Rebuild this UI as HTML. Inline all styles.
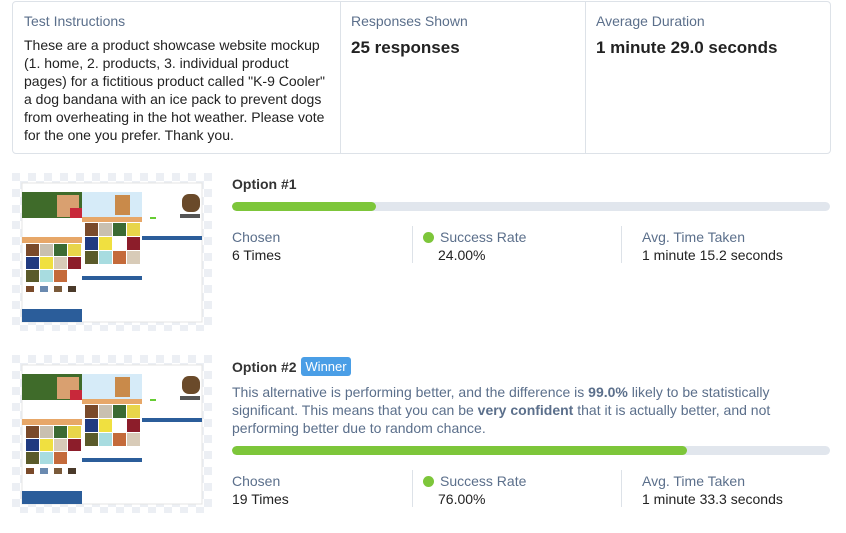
<!DOCTYPE html>
<html><head><meta charset="utf-8"><style>
body{margin:0;width:846px;height:533px;background:#fff;font-family:"Liberation Sans",Arial,sans-serif;position:relative;overflow:hidden;color:#222}
.a{position:absolute;white-space:nowrap}
.lbl{color:#5b6f8b;font-size:14px}
.val{color:#222;font-size:14px}
.box{position:absolute;left:12px;top:1px;width:817px;height:151px;border:1px solid #dde2e8;border-radius:4px}
.vd{position:absolute;width:1px;background:#dde2e8}
.bar{position:absolute;left:232px;width:598px;height:9px;border-radius:5px;background:#e1e6ed;overflow:hidden}
.bar div{height:100%;background:#7dc63a;border-radius:5px}
.dot{display:inline-block;width:11px;height:11px;border-radius:50%;background:#7dc63a;margin-right:6px;vertical-align:-1px}
b{font-weight:bold}
</style></head><body>
<div class="box"></div>
<div class="vd" style="left:340px;top:2px;height:151px"></div>
<div class="vd" style="left:585px;top:2px;height:151px"></div>
<div class="a lbl" style="left:24px;top:13px">Test Instructions</div>
<div class="a val" style="left:24px;top:36px;line-height:18px">These are a product showcase website mockup<br>(1. home, 2. products, 3. individual product<br>pages) for a fictitious product called "K-9 Cooler"<br>a dog bandana with an ice pack to prevent dogs<br>from overheating in the hot weather. Please vote<br>for the one you prefer. Thank you.</div>
<div class="a lbl" style="left:351px;top:13px">Responses Shown</div>
<div class="a" style="left:351px;top:38px;font-size:17px;font-weight:bold;color:#222">25 responses</div>
<div class="a lbl" style="left:596px;top:13px">Average Duration</div>
<div class="a" style="left:596px;top:38px;font-size:17px;font-weight:bold;color:#222">1 minute 29.0 seconds</div>

<svg width="0" height="0" style="position:absolute"><defs>
<pattern id="ck" width="16" height="16" patternUnits="userSpaceOnUse"><rect width="16" height="16" fill="#fff"/><rect width="8" height="8" fill="#eceff4"/><rect x="8" y="8" width="8" height="8" fill="#eceff4"/></pattern>
<g id="mock">
<rect width="200" height="158" fill="url(#ck)"/>
<rect x="10" y="10" width="180" height="139" fill="#fff" stroke="#e4e4e4"/>
<rect x="10" y="19" width="60" height="26" fill="#3f6b2a"/><rect x="45" y="22" width="22" height="22" fill="#d9a070"/><rect x="58" y="35" width="12" height="10" fill="#c8283a"/>
<rect x="10" y="64" width="60" height="6" fill="#e7a768"/>
<rect x="14" y="71" width="13" height="12" fill="#7a4a2a"/><rect x="28" y="71" width="13" height="12" fill="#c9c0b0"/><rect x="42" y="71" width="13" height="12" fill="#3b6a33"/><rect x="56" y="71" width="13" height="12" fill="#e8d54a"/>
<rect x="14" y="84" width="13" height="12" fill="#203a80"/><rect x="28" y="84" width="13" height="12" fill="#f0e040"/><rect x="42" y="84" width="13" height="12" fill="#d8cbb8"/><rect x="56" y="84" width="13" height="12" fill="#8c1d2a"/>
<rect x="14" y="97" width="13" height="12" fill="#5a5a2a"/><rect x="28" y="97" width="13" height="12" fill="#a8dce0"/><rect x="42" y="97" width="13" height="12" fill="#c46a3a"/>
<rect x="14" y="113" width="8" height="6" fill="#7a4a2a"/><rect x="28" y="113" width="8" height="6" fill="#6a8ab0"/><rect x="42" y="113" width="8" height="6" fill="#7a5a3a"/><rect x="56" y="113" width="8" height="6" fill="#4a3a2a"/>
<rect x="10" y="136" width="60" height="13" fill="#2b5d9a"/>
<rect x="70" y="19" width="60" height="25" fill="#d6ebf8"/><rect x="103" y="22" width="15" height="20" fill="#c98a4a"/>
<rect x="70" y="44" width="60" height="5" fill="#e7a768"/>
<rect x="73" y="50" width="13" height="13" fill="#7a4a2a"/><rect x="87" y="50" width="13" height="13" fill="#c9c0b0"/><rect x="101" y="50" width="13" height="13" fill="#3b6a33"/><rect x="115" y="50" width="13" height="13" fill="#e8d54a"/>
<rect x="73" y="64" width="13" height="13" fill="#203a80"/><rect x="87" y="64" width="13" height="13" fill="#f0e040"/><rect x="115" y="64" width="13" height="13" fill="#8c1d2a"/>
<rect x="73" y="78" width="13" height="13" fill="#5a5a2a"/><rect x="87" y="78" width="13" height="13" fill="#a8dce0"/><rect x="101" y="78" width="13" height="13" fill="#c46a3a"/><rect x="115" y="78" width="13" height="13" fill="#d8cbb8"/>
<rect x="70" y="103" width="60" height="4" fill="#2b5d9a"/>
<rect x="170" y="21" width="18" height="18" rx="7" fill="#6a4a2a"/><rect x="168" y="41" width="20" height="4" fill="#555"/>
<rect x="138" y="44" width="6" height="2" fill="#6c3"/><rect x="138" y="63" width="8" height="2" fill="#6c3"/>
<rect x="130" y="63" width="60" height="4" fill="#2b5d9a"/>
</g></defs></svg>

<svg class="a" style="left:12px;top:173px" width="200" height="158"><use href="#mock"/></svg>
<svg class="a" style="left:12px;top:355px" width="200" height="158"><use href="#mock"/></svg>

<div class="a" style="left:232px;top:176px;font-size:14px;font-weight:bold;color:#333">Option #1</div>
<div class="bar" style="top:202px"><div style="width:144px"></div></div>
<div class="vd" style="left:412px;top:226px;height:37px"></div>
<div class="vd" style="left:621px;top:226px;height:37px"></div>
<div class="a lbl" style="left:232px;top:229px">Chosen</div>
<div class="a val" style="left:232px;top:247px">6 Times</div>
<div class="a lbl" style="left:423px;top:229px"><span class="dot"></span>Success Rate</div>
<div class="a val" style="left:438px;top:247px">24.00%</div>
<div class="a lbl" style="left:642px;top:229px">Avg. Time Taken</div>
<div class="a val" style="left:642px;top:247px">1 minute 15.2 seconds</div>

<div class="a" style="left:232px;top:359px;font-size:14px;font-weight:bold;color:#333">Option #2</div>
<div class="a" style="left:301px;top:357px;width:50px;height:19px;background:#4a9ee6;border-radius:3px;color:#fff;font-size:13px;line-height:19px;text-align:center">Winner</div>
<div class="a lbl" style="left:232px;top:383px;line-height:18px">This alternative is performing better, and the difference is <b>99.0%</b> likely to be statistically<br>significant. This means that you can be <b>very confident</b> that it is actually better, and not<br>performing better due to random chance.</div>
<div class="bar" style="top:446px"><div style="width:455px"></div></div>
<div class="vd" style="left:412px;top:470px;height:37px"></div>
<div class="vd" style="left:621px;top:470px;height:37px"></div>
<div class="a lbl" style="left:232px;top:473px">Chosen</div>
<div class="a val" style="left:232px;top:491px">19 Times</div>
<div class="a lbl" style="left:423px;top:473px"><span class="dot"></span>Success Rate</div>
<div class="a val" style="left:438px;top:491px">76.00%</div>
<div class="a lbl" style="left:642px;top:473px">Avg. Time Taken</div>
<div class="a val" style="left:642px;top:491px">1 minute 33.3 seconds</div>
</body></html>
